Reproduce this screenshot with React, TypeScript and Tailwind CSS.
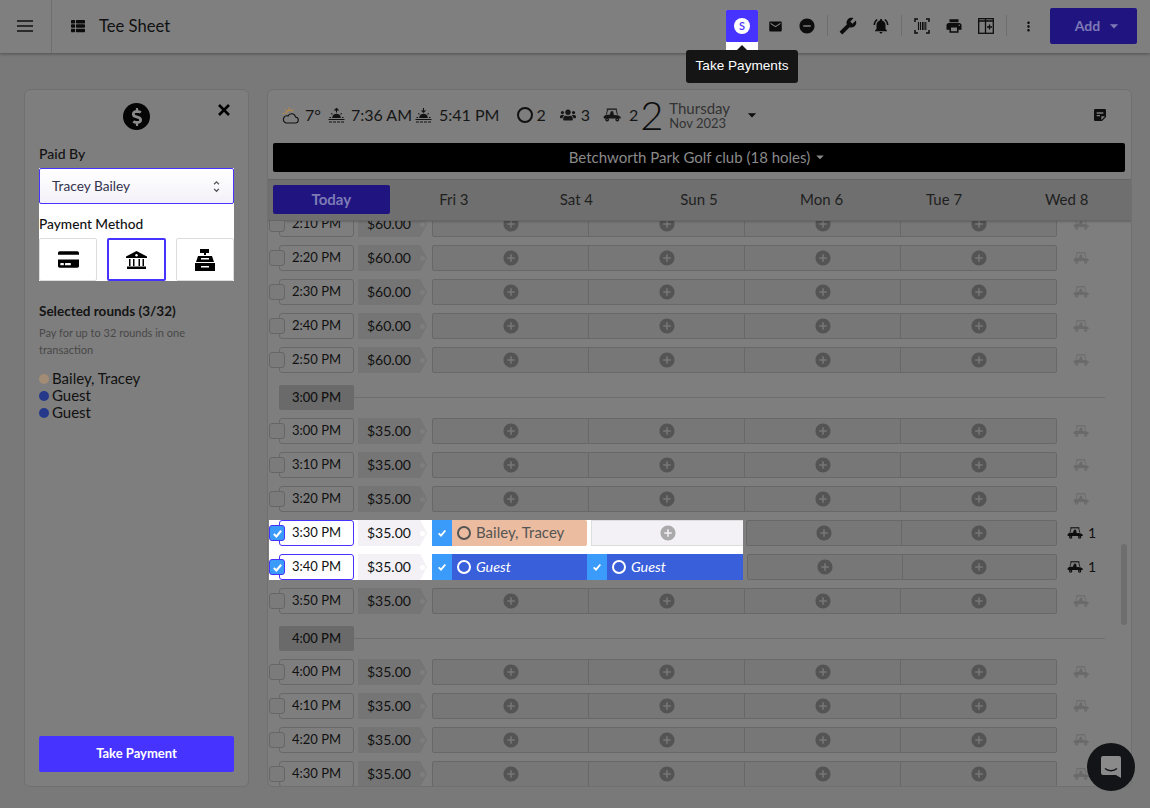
import React from "react";
import { MdEmail, MdDoNotDisturbOn, MdBuild, MdNotificationsActive, MdPrint, MdMoreVert, MdStickyNote2, MdUnfoldMore, MdAddCircle, MdArrowDropDown } from "react-icons/md";
import { FaThList, FaDollarSign, FaCreditCard, FaUsers } from "react-icons/fa";

function Cart({ className = "" }: { className?: string }) {
  return (
    <svg viewBox="0 0 24 18" className={className} fill="none">
      <path d="M5 1.2h13.5" stroke="currentColor" strokeWidth="1.6" />
      <path d="M6.3 1.5 4.5 8M17.5 1.5l1.7 7" stroke="currentColor" strokeWidth="1.2" />
      <path d="M1 13.5V10.5l3-2h5l1.5-4.5h3l1 5 5.5.2 3.5 2v2.3H1z" fill="currentColor" />
      <circle cx="5.5" cy="15" r="2.5" fill="currentColor" />
      <circle cx="19" cy="15" r="2.5" fill="currentColor" />
      <circle cx="5.5" cy="15" r="0.8" fill="#7e7e7e" />
      <circle cx="19" cy="15" r="0.8" fill="#7e7e7e" />
    </svg>
  );
}

function CloudSun() {
  return (
    <svg viewBox="0 0 17 17" className="h-[17px] w-[17px] shrink-0" fill="none">
      <path d="M4 7a4 4 0 0 1 7-2.5" stroke="#b98a45" strokeWidth="1.1" />
      <path d="M7 .5v2M2.5 2l1.4 1.4M11.5 2l-1.4 1.4M.5 6.5h2" stroke="#b98a45" strokeWidth="1" />
      <path d="M4 16h9a3 3 0 0 0 .5-6 4 4 0 0 0-7.5-1A3.5 3.5 0 0 0 4 16z" stroke="#111" strokeWidth="1.1" />
    </svg>
  );
}

function SunMark({ down }: { down?: boolean }) {
  return (
    <svg viewBox="0 0 17 16" className="h-[16px] w-[17px] shrink-0" fill="none" stroke="#111">
      {down ? <path d="M8.5 1v4M6.5 3.3l2 2 2-2" strokeWidth="1.1" /> : <path d="M8.5 5.5v-4M6.5 3.5l2-2 2 2" strokeWidth="1.1" />}
      <path d="M4.5 11a4 4 0 0 1 8 0" fill="#111" strokeWidth="0.6" />
      <path d="M1.5 10.5h1.6M13.9 10.5h1.6M3.3 6.3l1.1 1.1M13.7 6.3l-1.1 1.1" strokeWidth="1.1" />
      <path d="M.5 12.5h16" strokeWidth="1.1" />
      <path d="M1 15h15" strokeWidth="1.1" strokeDasharray="3 1" />
    </svg>
  );
}

function Bank() {
  return (
    <svg viewBox="0 0 21 18" className="h-[18px] w-[21px]" fill="#000">
      <path d="M10.5 0 21 5.5v1.5H0V5.5z" />
      <circle cx="10.5" cy="4.2" r="1.2" fill="#fff" />
      <path d="M3 8h1.5v7H3zM7 8h1.5v7H7zM12.5 8H14v7h-1.5zM16.5 8H18v7h-1.5zM1 15.5h19V18H1z" />
    </svg>
  );
}

function Register() {
  return (
    <svg viewBox="0 0 22 22" className="h-[22px] w-[22px]" fill="#000">
      <path d="M6 0h9v4h-3v2h-2V4H6z" />
      <path d="M4 7h14l2 6H2zM1 14h20v8H1z" />
      <path d="M7 9h8v1.5H7zM7 17h8v1.6H7z" fill="#fff" />
    </svg>
  );
}

function Tick({ size }: { size: string }) {
  return (
    <svg viewBox="0 0 12 12" className={size} fill="none" stroke="#fff" strokeWidth="2.2">
      <path d="M2 6.5 4.8 9.2 10 3" />
    </svg>
  );
}

function Plus({ className = "" }: { className?: string }) {
  return <MdAddCircle className={className} />;
}

function Ring({ className = "" }: { className?: string }) {
  return <span className={`inline-block shrink-0 rounded-full border-2 ${className}`} />;
}

function Divider() {
  return <span className="mx-[4px] mt-[5px] h-[21px] w-px bg-[#6e6e6e]" />;
}

function ToolIcon({ children, className = "" }: { children: React.ReactNode; className?: string }) {
  return <span className={`flex h-8 w-8 items-center justify-center text-[#0d0d0d] ${className}`}>{children}</span>;
}

function TopBar() {
  return (
    <header className="relative z-20 flex h-[53px] items-center bg-[#7f7f7f] shadow-[0_1px_3px_rgba(0,0,0,0.35)]">
      <div className="flex h-full w-[52px] items-center justify-center border-r border-[#6f6f6f] pr-[1px] pb-[1px]">
        <svg viewBox="0 0 16 12" className="h-[12px] w-[16px]" stroke="#111" strokeWidth="1.4">
          <path d="M0 1h16M0 6h16M0 11h16" />
        </svg>
      </div>
      <FaThList className="mb-[1px] ml-[19px] h-[14px] w-[14px] text-[#0d0d0d]" />
      <span className="mb-[1px] ml-[14px] text-[16.6px] leading-none text-[#111]">Tee Sheet</span>
      <div className="ml-auto flex h-full items-start pr-[13px] pt-[10px]">
        <div className="relative mr-[1px] flex h-[40px] w-8 flex-col bg-white">
          <div className="flex h-8 w-8 items-center justify-center rounded-[1px] bg-[#4733ff]">
            <span className="flex h-4 w-4 items-center justify-center rounded-full bg-white text-[11px] font-semibold text-[#4733ff]">S</span>
          </div>
          <div className="absolute left-[-40px] top-[40px] z-30 flex h-[33px] w-[112px] items-center justify-center rounded-[3px] bg-[#151515] font-['Liberation_Sans',sans-serif] text-[13.6px] text-white">
            <span className="absolute top-[-5px] left-[51px] h-0 w-0 border-x-[5px] border-b-[5px] border-x-transparent border-b-[#151515]" />
            Take Payments
          </div>
        </div>
        <ToolIcon><MdEmail className="h-[15px] w-[15px]" /></ToolIcon>
        <ToolIcon><MdDoNotDisturbOn className="h-[18px] w-[18px]" /></ToolIcon>
        <Divider />
        <ToolIcon><MdBuild className="h-[18px] w-[18px] -scale-x-100" /></ToolIcon>
        <ToolIcon className="ml-[1px]"><MdNotificationsActive className="h-[18px] w-[18px]" /></ToolIcon>
        <Divider />
        <ToolIcon>
          <svg viewBox="0 0 16 16" className="h-[16px] w-[16px]" fill="none" stroke="#0d0d0d" strokeWidth="1.5">
            <path d="M1 4V1h3M12 1h3v3M15 12v3h-3M4 15H1v-3" />
            <path d="M4.5 4v8M6.5 4v8M8.5 4v8M10 4v8M11.8 4v8" strokeWidth="1.1" />
          </svg>
        </ToolIcon>
        <ToolIcon><MdPrint className="h-[18px] w-[18px]" /></ToolIcon>
        <ToolIcon>
          <svg viewBox="0 0 16 16" className="h-[16px] w-[16px]" fill="none" stroke="#0d0d0d" strokeWidth="1.3">
            <rect x="0.7" y="0.7" width="14.6" height="14.6" />
            <path d="M7.5 1v14M1 3h14" />
            <path d="M9 9h5M11.5 6.5v5" />
          </svg>
        </ToolIcon>
        <Divider />
        <span className="ml-[2px] flex h-8 w-[30px] items-center justify-center text-[#0d0d0d]"><MdMoreVert className="h-[15px] w-[15px]" /></span>
        <button className="ml-[7px] mt-[-2px] flex h-9 w-[87px] items-center justify-center rounded-[2px] bg-[#201580] pb-[1px] pl-[12px] text-[14px] font-bold text-[#7e7ab5]">
          Add<MdArrowDropDown className="ml-[4px] h-[20px] w-[20px]" />
        </button>
      </div>
    </header>
  );
}

function LeftPanel() {
  return (
    <aside className="flex h-[698px] w-[225px] shrink-0 flex-col rounded-[6px] border border-[#707070] bg-[#7e7e7e] px-[14px] pt-[13px] pb-[14px]">
      <div className="relative flex h-[27px] justify-center">
        <span className="flex h-[27px] w-[27px] items-center justify-center rounded-full bg-[#050505] text-[#8b8b8b]">
          <FaDollarSign className="h-[18px] w-[18px]" />
        </span>
        <svg viewBox="0 0 12 12" className="absolute right-[4px] top-[1px] h-[12px] w-[12px]" stroke="#000" strokeWidth="2.6">
          <path d="M1 1l10 10M11 1 1 11" />
        </svg>
      </div>
      <p className="mt-[15px] text-[14px] font-medium leading-[17px] text-[#111]">Paid By</p>
      <div className="mt-[6px] bg-white">
        <div className="flex h-[36px] items-center justify-between rounded-[2px] border border-[#4733ff] bg-linear-to-b from-white to-[#f3f1f8] pl-[12px] pr-[9px] text-[13.7px] text-[#33334d]">
          Tracey Bailey
          <MdUnfoldMore className="h-[15px] w-[15px] text-[#555]" />
        </div>
        <p className="mt-[11px] text-[13.7px] font-medium leading-[17px] text-[#111]">Payment Method</p>
        <div className="mt-[6px] flex h-[43px] justify-between">
          <span className="flex h-full w-[58px] items-center justify-center rounded-[2px] border border-[#ddd]"><FaCreditCard className="h-[19px] w-[21px] text-black" /></span>
          <span className="flex h-full w-[59px] items-center justify-center rounded-[2px] border-2 border-[#4733ff]"><Bank /></span>
          <span className="flex h-full w-[58px] items-center justify-center rounded-[2px] border border-[#ddd]"><Register /></span>
        </div>
      </div>
      <p className="mt-[22px] text-[13.5px] font-bold leading-[17px] text-[#141414]">Selected rounds (3/32)</p>
      <p className="mt-[4px] text-[11px] leading-[17px] text-[#484848]">Pay for up to 32 rounds in one transaction</p>
      <ul className="mt-[12px] text-[15px] leading-[17px] text-[#111]">
        <li className="flex items-center gap-[3px]"><span className="h-[10px] w-[10px] rounded-full bg-[#a28c76]" />Bailey, Tracey</li>
        <li className="flex items-center gap-[3px]"><span className="h-[10px] w-[10px] rounded-full bg-[#26388a]" />Guest</li>
        <li className="flex items-center gap-[3px]"><span className="h-[10px] w-[10px] rounded-full bg-[#26388a]" />Guest</li>
      </ul>
      <button className="mt-auto h-[36px] w-full rounded-[2px] bg-[#4733ff] text-[13px] font-bold text-white">Take Payment</button>
    </aside>
  );
}

function CardHeader() {
  return (
    <div className="h-[89px] shrink-0">
      <div className="flex h-[50px] items-center pl-[14px] pr-[23px] text-[16px] text-[#161616]">
        <CloudSun />
        <span className="ml-[6px]">7°</span>
        <span className="ml-[7px]"><SunMark /></span>
        <span className="ml-[6px]">7:36 AM</span>
        <span className="ml-[3px]"><SunMark down /></span>
        <span className="ml-[7px]">5:41 PM</span>
        <Ring className="ml-[18px] h-[16px] w-[16px] border-[#111]" />
        <span className="ml-[3px]">2</span>
        <FaUsers className="ml-[14px] h-[16px] w-[16px]" />
        <span className="ml-[5px]">3</span>
        <Cart className="ml-[13px] h-[14px] w-[18px]" />
        <span className="ml-[8px]">2</span>
        <span className="ml-[2px] w-[24px] text-[40px] font-light leading-none text-[#0d0d0d]">2</span>
        <span className="ml-[5px] flex flex-col text-[#333]">
          <span className="text-[15px] leading-[16px]">Thursday</span>
          <span className="text-[13px] leading-[15px]">Nov 2023</span>
        </span>
        <MdArrowDropDown className="ml-[12px] h-[20px] w-[20px] text-[#0d0d0d]" />
        <MdStickyNote2 className="ml-auto h-[16px] w-[16px] text-[#0f0f0f]" />
      </div>
      <div className="ml-[5px] mr-[6px] mt-[3px] flex h-[29px] items-center justify-center rounded-[2px] bg-black pb-[1px] text-[15px] text-[#8a8a8a]">
        Betchworth Park Golf club (18 holes)
        <MdArrowDropDown className="ml-[1px] h-[18px] w-[18px]" />
      </div>
    </div>
  );
}

function DayTabs() {
  const days = ["Fri 3", "Sat 4", "Sun 5", "Mon 6", "Tue 7", "Wed 8"];
  return (
    <div className="relative z-10 grid h-[42px] shrink-0 grid-cols-7 items-center border-y border-[#666] bg-[#6f6f6f] pl-[2px] pr-[3px] pb-[1px] text-[15px] text-[#1f1f1f] shadow-[0_1px_2px_rgba(0,0,0,0.2)]">
      <span className="mx-[3px] flex h-[29px] items-center justify-center rounded-[2px] bg-[#201580] pb-[1px] font-bold text-[#7e7ab5]">Today</span>
      {days.map((d) => (
        <span key={d} className="text-center">{d}</span>
      ))}
    </div>
  );
}

function DimSlots({ cols = 4, className = "" }: { cols?: number; className?: string }) {
  return (
    <div className={`flex h-[26px] rounded-[2px] border border-[#686868] bg-[#777777] ${className}`}>
      {Array.from({ length: cols }).map((_, i) => (
        <span key={i} className="flex flex-1 items-center justify-center border-l border-[#686868] first:border-l-0">
          <Plus className="h-[18px] w-[18px] text-[#545454]" />
        </span>
      ))}
    </div>
  );
}

function CartCell({ count }: { count?: number }) {
  return (
    <div className="ml-[15px] flex h-[26px] w-[36px] items-center pb-[1px] text-[14px] text-[#111]">
      {count ? (
        <>
          <Cart className="ml-[-5px] h-[12px] w-[16px] text-[#0d0d0d]" />
          <span className="ml-[5px]">{count}</span>
        </>
      ) : (
        <Cart className="ml-[1px] h-[12px] w-[16px] text-[#6a6a6a]" />
      )}
    </div>
  );
}

function Row({ time, price, active, children, count }: { time: string; price: string; active?: boolean; children?: React.ReactNode; count?: number }) {
  return (
    <div className="relative flex h-[26px] items-center text-[14px] text-[#111]">
      <span className={`relative z-10 flex h-[16px] w-[16px] shrink-0 items-center justify-center rounded-[3px] border ${active ? "border-[#4733ff] bg-[#3b9bfb]" : "border-[#666] bg-[#7b7b7b]"}`}>
        {active && <Tick size="h-[11px] w-[11px]" />}
      </span>
      <span className={`ml-[-6px] flex h-[26px] w-[75px] shrink-0 items-center justify-center rounded-[3px] border pb-[1px] text-[13px] ${active ? "border-[#4733ff] bg-white" : "border-[#686868]"}`}>{time}</span>
      <span className={`ml-[4px] flex h-[26px] w-[69px] shrink-0 items-center pb-[1px] pl-[9px] [clip-path:polygon(0_0,90%_0,100%_50%,90%_100%,0_100%)] ${active ? "bg-[#f3f1f5]" : "bg-[#757575]"}`}>
        {price}
        <span className={`ml-auto mr-[2px] mt-[1px] h-[5px] w-[5px] rounded-full ${active ? "bg-white" : "bg-[#7e7e7e]"}`} />
      </span>
      <div className="ml-[5px] flex w-[625px] shrink-0">
        {children ?? <DimSlots className="w-full" />}
      </div>
      <CartCell count={count} />
    </div>
  );
}

function Section({ label }: { label: string }) {
  return (
    <div className="mt-[4px] flex h-[25px] items-center pl-[10px]">
      <span className="flex h-[25px] w-[75px] items-center justify-center rounded-[2px] bg-[#6a6a6a] text-[13px] font-medium text-[#111]">{label}</span>
      <span className="h-px w-[751px] bg-[#6e6e6e]" />
    </div>
  );
}

function Check() {
  return (
    <span className="flex h-[26px] w-[20px] shrink-0 items-center justify-center bg-[#3b9bfb]">
      <Tick size="h-[10px] w-[10px]" />
    </span>
  );
}

function Slots() {
  const first = ["2:10 PM", "2:20 PM", "2:30 PM", "2:40 PM", "2:50 PM"];
  const third = ["3:00 PM", "3:10 PM", "3:20 PM"];
  const fourth = ["4:00 PM", "4:10 PM", "4:20 PM", "4:30 PM"];
  return (
    <div className="relative min-h-0 flex-1 overflow-hidden">
      <div className="mt-[-10px] flex flex-col gap-[8px] pl-[1px]">
        {first.map((t) => <Row key={t} time={t} price="$60.00" />)}
        <Section label="3:00 PM" />
        {third.map((t) => <Row key={t} time={t} price="$35.00" />)}
        <div className="relative flex flex-col gap-[8px]">
          <div className="absolute left-0 top-0 h-[60px] w-[474px] bg-white" />
          <Row time="3:30 PM" price="$35.00" active count={1}>
            <div className="flex w-full">
              <Check />
              <span className="flex h-[26px] w-[135px] shrink-0 items-center rounded-r-[2px] bg-[#ebbc9f] pb-[1px] pl-[5px] text-[15px] text-[#555]">
                <Ring className="mr-[5px] h-[14px] w-[14px] border-[#555]" />Bailey, Tracey
              </span>
              <span className="ml-[4px] flex h-[26px] w-[152px] shrink-0 items-center justify-center border border-r-0 border-[#ddd] bg-[#f3f1f5]">
                <Plus className="ml-[1px] h-[18px] w-[18px] text-[#aaa]" />
              </span>
              <DimSlots cols={2} className="ml-[3px] flex-1" />
            </div>
          </Row>
          <Row time="3:40 PM" price="$35.00" active count={1}>
            <div className="flex w-full">
              <Check />
              <span className="flex h-[26px] w-[135px] shrink-0 items-center bg-[#3a5fdb] pb-[1px] pl-[5px] text-[14.3px] italic text-white">
                <Ring className="mr-[5px] h-[14px] w-[14px] border-white" />Guest
              </span>
              <Check />
              <span className="flex h-[26px] w-[136px] shrink-0 items-center bg-[#3a5fdb] pb-[1px] pl-[5px] text-[14.3px] italic text-white">
                <Ring className="mr-[5px] h-[14px] w-[14px] border-white" />Guest
              </span>
              <DimSlots cols={2} className="ml-[4px] flex-1" />
            </div>
          </Row>
        </div>
        <Row time="3:50 PM" price="$35.00" />
        <Section label="4:00 PM" />
        {fourth.map((t) => <Row key={t} time={t} price="$35.00" />)}
      </div>
      <span className="absolute right-[4px] top-[323px] h-[81px] w-[6px] rounded-full bg-[#6e6e6e]" />
    </div>
  );
}

export default function App() {
  return (
    <div className="relative h-[808px] w-[1150px] overflow-hidden bg-[#797979] font-['Lato',sans-serif]">
      <TopBar />
      <main className="flex gap-[18px] pl-[24px] pt-[36px]">
        <LeftPanel />
        <section className="flex h-[698px] w-[865px] shrink-0 flex-col overflow-hidden rounded-[6px] border border-[#707070] bg-[#7e7e7e]">
          <CardHeader />
          <DayTabs />
          <Slots />
        </section>
      </main>
      <button className="absolute left-[1087px] top-[743px] z-30 flex h-[48px] w-[48px] items-center justify-center rounded-full bg-[#131417]">
        <svg viewBox="0 0 22 24" className="h-[24px] w-[22px]" fill="#8a8a8a">
          <path d="M3 1h16a2 2 0 0 1 2 2v20l-5-3H3a2 2 0 0 1-2-2V3a2 2 0 0 1 2-2z" />
          <path d="M5 13.5c3.5 3 8.5 3 12 0" fill="none" stroke="#131417" strokeWidth="1.5" />
        </svg>
      </button>
    </div>
  );
}
